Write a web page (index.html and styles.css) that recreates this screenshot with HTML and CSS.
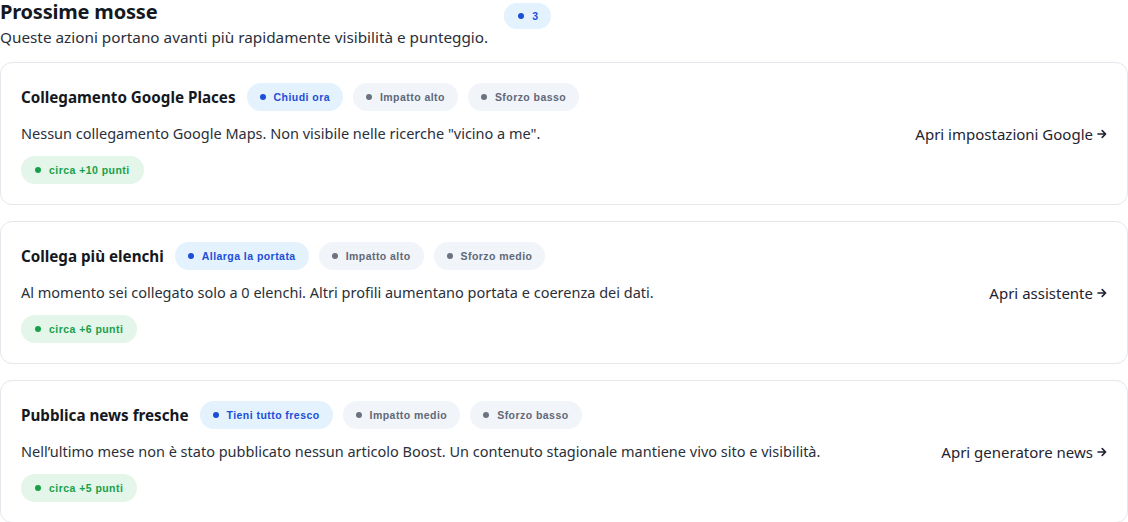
FILE: index.html
```html
<!DOCTYPE html>
<html lang="it">
<head>
<meta charset="utf-8">
<title>Prossime mosse</title>
<link rel="stylesheet" href="styles.css">
</head>
<body>
<section class="moves">
  <header class="moves-head">
    <div class="head-text">
      <h2 class="head-title">Prossime mosse</h2>
      <p class="head-sub">Queste azioni portano avanti più rapidamente visibilità e punteggio.</p>
    </div>
    <span class="pill pill-blue pill-count"><span class="dot"></span>3</span>
  </header>

  <div class="card-list">
    <article class="card">
      <div class="card-main">
        <div class="card-top">
          <h3 class="card-title">Collegamento Google Places</h3>
          <span class="pill pill-blue"><span class="dot"></span>Chiudi ora</span>
          <span class="pill pill-gray"><span class="dot"></span>Impatto alto</span>
          <span class="pill pill-gray"><span class="dot"></span>Sforzo basso</span>
        </div>
        <p class="card-desc">Nessun collegamento Google Maps. Non visibile nelle ricerche "vicino a me".</p>
        <div class="card-points"><span class="pill pill-green"><span class="dot"></span>circa +10 punti</span></div>
      </div>
      <a class="card-link" href="#">Apri impostazioni Google<svg class="arrow" viewBox="0 0 10 10" aria-hidden="true"><path d="M1 5h7.5M5.2 1.6 8.6 5 5.2 8.4"/></svg></a>
    </article>

    <article class="card">
      <div class="card-main">
        <div class="card-top">
          <h3 class="card-title">Collega più elenchi</h3>
          <span class="pill pill-blue"><span class="dot"></span>Allarga la portata</span>
          <span class="pill pill-gray"><span class="dot"></span>Impatto alto</span>
          <span class="pill pill-gray"><span class="dot"></span>Sforzo medio</span>
        </div>
        <p class="card-desc">Al momento sei collegato solo a 0 elenchi. Altri profili aumentano portata e coerenza dei dati.</p>
        <div class="card-points"><span class="pill pill-green"><span class="dot"></span>circa +6 punti</span></div>
      </div>
      <a class="card-link" href="#">Apri assistente<svg class="arrow" viewBox="0 0 10 10" aria-hidden="true"><path d="M1 5h7.5M5.2 1.6 8.6 5 5.2 8.4"/></svg></a>
    </article>

    <article class="card">
      <div class="card-main">
        <div class="card-top">
          <h3 class="card-title">Pubblica news fresche</h3>
          <span class="pill pill-blue"><span class="dot"></span>Tieni tutto fresco</span>
          <span class="pill pill-gray"><span class="dot"></span>Impatto medio</span>
          <span class="pill pill-gray"><span class="dot"></span>Sforzo basso</span>
        </div>
        <p class="card-desc">Nell’ultimo mese non è stato pubblicato nessun articolo Boost. Un contenuto stagionale mantiene vivo sito e visibilità.</p>
        <div class="card-points"><span class="pill pill-green"><span class="dot"></span>circa +5 punti</span></div>
      </div>
      <a class="card-link" href="#">Apri generatore news<svg class="arrow" viewBox="0 0 10 10" aria-hidden="true"><path d="M1 5h7.5M5.2 1.6 8.6 5 5.2 8.4"/></svg></a>
    </article>
  </div>
</section>
</body>
</html>
```

FILE: styles.css
```css
* { box-sizing: border-box; }

body {
  margin: 0;
  background: #ffffff;
  font-family: "Noto Sans", "Open Sans", Arial, sans-serif;
  color: #1f2330;
}

.moves {
  width: 1128px;
}

.moves-head {
  display: flex;
  align-items: flex-start;
  gap: 16px;
  height: 62px;
}

.head-title {
  margin: 0;
  font-size: 20px;
  line-height: 24px;
  font-weight: 700;
  color: #141821;
  letter-spacing: -0.2px;
}

.head-sub {
  margin: 3px 0 0;
  font-size: 15.3px;
  line-height: 20px;
  color: #2a2f3a;
}

.pill {
  display: inline-flex;
  align-items: center;
  height: 28px;
  padding: 0 13px;
  border-radius: 14px;
  font-family: "Liberation Sans", Arial, sans-serif;
  font-size: 10.5px;
  font-weight: 700;
  white-space: nowrap;
  letter-spacing: 0.45px;
}

.pill .dot {
  width: 6px;
  height: 6px;
  border-radius: 50%;
  margin-right: 8px;
  background: currentColor;
}

.pill-count {
  height: 26px;
  margin-top: 3px;
  padding: 0 13px 0 14px;
}

.pill-blue { background: #e3f2fd; color: #1d4ed8; }
.pill-gray { background: #f1f4f8; color: #5f6878; }
.pill-gray .dot { background: #6b7280; }
.pill-green { background: #e4f5e9; color: #17a04a; padding: 0 14px; }

.card-list {
  display: flex;
  flex-direction: column;
  gap: 16px;
}

.card {
  display: flex;
  align-items: center;
  justify-content: space-between;
  border: 1px solid #e4e7ec;
  border-radius: 12px;
  padding: 20px;
  background: #ffffff;
}

.card-main {
  display: flex;
  flex-direction: column;
  gap: 12px;
}

.card-top {
  display: flex;
  align-items: center;
  gap: 10px;
}

.card-title {
  margin: 0 1px 0 0;
  font-size: 15.2px;
  font-weight: 700;
  color: #141821;
}

.card-desc {
  margin: 0;
  font-size: 14.5px;
  line-height: 21px;
  color: #2a2f3a;
}

.card-points {
  display: flex;
}

.card-link {
  display: inline-flex;
  align-items: center;
  gap: 4px;
  font-size: 15px;
  color: #1f2330;
  text-decoration: none;
  white-space: nowrap;
}

.arrow {
  width: 10px;
  height: 10px;
  fill: none;
  stroke: #1f2330;
  stroke-width: 1.6;
  stroke-linecap: round;
  stroke-linejoin: round;
}
```
